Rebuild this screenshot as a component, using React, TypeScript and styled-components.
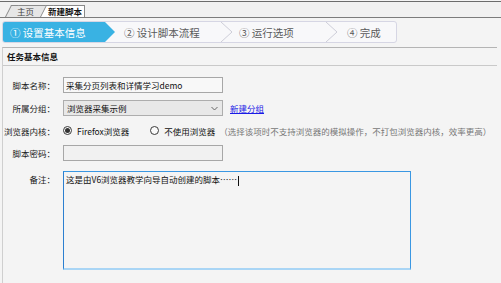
import React from 'react';
import styled, { createGlobalStyle } from 'styled-components';

const GlobalStyle = createGlobalStyle`
  html, body { margin: 0; padding: 0; background: #f4f4f4; }
  body {
    font-family: "Noto Sans CJK SC", "Liberation Sans", sans-serif;
    font-size: 8.5px;
    color: #222;
  }
  * { box-sizing: border-box; }
`;

const Page = styled.div`
  width: 501px;
  height: 283px;
  overflow: hidden;
  display: flex;
  flex-direction: column;
`;

const TabBar = styled.div`
  margin-top: 1px;
  height: 17px;
  border-top: 1px solid #6c6c6c;
  border-bottom: 1px solid #7c7c7c;
  background: #f1f1f1;
  display: flex;
  align-items: flex-end;
  padding-left: 11px;
`;

const Tab = styled.div<{ $active?: boolean }>`
  position: relative;
  height: 12px;
  line-height: 11px;
  padding: 0 ${(p) => (p.$active ? '2px' : '0')} 0 ${(p) => (p.$active ? '2px' : '6px')};
  width: ${(p) => (p.$active ? 'auto' : '36px')};
  margin-left: ${(p) => (p.$active ? '-1px' : '0')};
  border-top: 1px solid #8a8a8a;
  border-right: 1px solid #8a8a8a;
  background: ${(p) => (p.$active ? '#ffffff' : '#e6e6e6')};
  color: ${(p) => (p.$active ? '#111' : '#444')};
  font-weight: ${(p) => (p.$active ? 'bold' : 'normal')};
  z-index: ${(p) => (p.$active ? 2 : 1)};

  &::before {
    content: '';
    position: absolute;
    left: -6px;
    top: -1px;
    bottom: 0;
    width: 7px;
    border-left: 1px solid #8a8a8a;
    border-top: 1px solid #8a8a8a;
    background: inherit;
    transform: skewX(-27deg);
    transform-origin: bottom left;
  }

  span {
    position: relative;
  }
`;

const StepBar = styled.div`
  margin: 3px 0 0 2px;
  width: 395px;
  height: 22px;
  border: 1px solid #d6d6e4;
  border-radius: 3px;
  background: #f8f8fa;
  display: flex;
  overflow: hidden;
`;

const Step = styled.div<{ $active?: boolean; $w: number; $pad: number }>`
  position: relative;
  flex: 0 0 ${(p) => p.$w}px;
  padding-left: ${(p) => p.$pad}px;
  display: flex;
  align-items: center;
  font-size: 10.5px;
  color: ${(p) => (p.$active ? '#ffffff' : '#5a5a5a')};
  background: ${(p) => (p.$active ? '#39b2e3' : 'transparent')};
  clip-path: ${(p) =>
    p.$active ? 'polygon(0 0, calc(100% - 10px) 0, 100% 50%, calc(100% - 10px) 100%, 0 100%)' : 'none'};
  white-space: nowrap;

  svg {
    position: absolute;
    right: 0;
    top: 0;
  }
`;

const Chevron = () => (
  <svg width="13" height="20" viewBox="0 0 13 20">
    <path d="M1 0 L12 10 L1 20" fill="none" stroke="#cdcdd8" strokeWidth="1" />
  </svg>
);

const Panel = styled.div`
  margin: 4px 0 0 2px;
  width: 495px;
  flex: 1;
  border-top: 1px solid #b4b4b4;
  border-left: 1px solid #cfcfcf;
`;

const PanelHeader = styled.div`
  height: 18px;
  line-height: 17px;
  padding-left: 4px;
  border-bottom: 1px solid #c9c9c9;
  font-weight: bold;
  color: #111;
`;

const Form = styled.div`
  display: grid;
  grid-template-columns: 52px 1fr;
  grid-template-rows: 16px 16px 15px 16px 102px;
  column-gap: 8px;
  row-gap: 7px;
  padding-top: 11px;
`;

const Label = styled.div<{ $top?: number }>`
  text-align: right;
  line-height: 16px;
  padding-top: ${(p) => p.$top ?? 0}px;
  white-space: nowrap;
  color: #222;
`;

const Field = styled.div<{ $top?: boolean }>`
  display: flex;
  align-items: ${(p) => (p.$top ? 'flex-end' : 'center')};
  white-space: nowrap;
`;

const TextBox = styled.div<{ $gray?: boolean }>`
  width: 160px;
  height: 16px;
  border: 1px solid #a7a7a7;
  background: ${(p) => (p.$gray ? '#f1f1f1' : '#f8f8f8')};
  padding-left: 2px;
  line-height: 14px;
  color: #111;
`;

const SelectBox = styled.div`
  width: 160px;
  height: 16px;
  border: 1px solid #adadad;
  background: #e8e8e8;
  padding: 0 4px 0 3px;
  line-height: 14px;
  display: flex;
  justify-content: space-between;
  align-items: center;
  color: #111;
`;

const Link = styled.a`
  margin-left: 7px;
  color: #1a1ae6;
  text-decoration: underline;
`;

const Radio = styled.span<{ $checked?: boolean }>`
  width: 9px;
  height: 9px;
  border-radius: 50%;
  border: 1px solid #3a3a3a;
  background: #fafafa;
  display: inline-flex;
  align-items: center;
  justify-content: center;
  margin-right: 5px;

  &::after {
    content: '';
    width: 5px;
    height: 5px;
    border-radius: 50%;
    background: ${(p) => (p.$checked ? '#333' : 'transparent')};
  }
`;

const Option = styled.span`
  display: inline-flex;
  align-items: center;
  margin-right: 21px;
  color: #111;
`;

const Note = styled.span`
  color: #777;
  margin-left: -17px;
`;

const Memo = styled.div`
  width: 348px;
  height: 99px;
  border: 1px solid #3a97e2;
  border-left-color: #2c7fd0;
  border-bottom: 2px solid #a9d5f5;
  padding: 1px 2px;
  line-height: 12px;
  color: #111;
`;

const Caret = styled.span`
  display: inline-block;
  width: 1px;
  height: 10px;
  background: #111;
  vertical-align: middle;
  margin-left: 1px;
`;

export default function App() {
  return (
    <Page>
      <GlobalStyle />
      <TabBar>
        <Tab>
          <span>主页</span>
        </Tab>
        <Tab $active>
          <span>新建脚本</span>
        </Tab>
      </TabBar>

      <StepBar>
        <Step $active $w={112} $pad={7}>① 设置基本信息</Step>
        <Step $w={118} $pad={9}>
          ② 设计脚本流程
          <Chevron />
        </Step>
        <Step $w={105} $pad={6}>
          ③ 运行选项
          <Chevron />
        </Step>
        <Step $w={58} $pad={9}>④ 完成</Step>
      </StepBar>

      <Panel>
        <PanelHeader>任务基本信息</PanelHeader>
        <Form>
          <Label>脚本名称：</Label>
          <Field>
            <TextBox>采集分页列表和详情学习demo</TextBox>
          </Field>

          <Label>所属分组：</Label>
          <Field>
            <SelectBox>
              <span>浏览器采集示例</span>
              <svg width="7" height="5" viewBox="0 0 7 5">
                <path d="M0.5 1 L3.5 4 L6.5 1" fill="none" stroke="#666" strokeWidth="1" />
              </svg>
            </SelectBox>
            <Link>新建分组</Link>
          </Field>

          <Label>浏览器内核：</Label>
          <Field>
            <Option>
              <Radio $checked />
              Firefox浏览器
            </Option>
            <Option>
              <Radio />
              不使用浏览器
            </Option>
            <Note>（选择该项时不支持浏览器的模拟操作，不打包浏览器内核，效率更高）</Note>
          </Field>

          <Label>脚本密码：</Label>
          <Field>
            <TextBox $gray />
          </Field>

          <Label $top={3}>备注：</Label>
          <Field $top>
            <Memo>
              这是由V6浏览器教学向导自动创建的脚本……
              <Caret />
            </Memo>
          </Field>
        </Form>
      </Panel>
    </Page>
  );
}
